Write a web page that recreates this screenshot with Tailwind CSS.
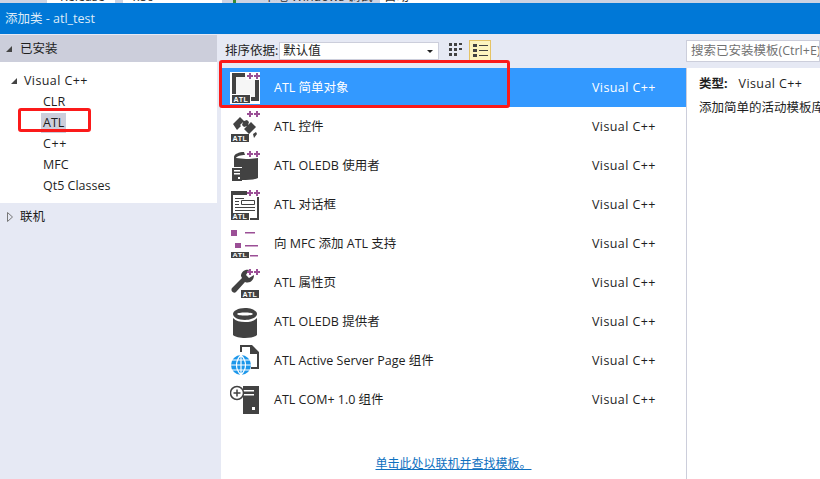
<!DOCTYPE html>
<html lang="zh">
  <head>
    <meta charset="UTF-8" />
    <title>添加类 - atl_test</title>
    <script src="https://cdn.jsdelivr.net/npm/@tailwindcss/browser@4"></script>
  </head>
  <body class="relative h-[479px] w-[820px] overflow-hidden bg-[#e6e9f4] font-['Open_Sans','Noto_Sans_CJK_SC',sans-serif] text-[12.5px] leading-[20px] text-[#1e1e1e]">
    <!-- shared icon parts -->
    <svg class="absolute h-0 w-0">
      <symbol id="plus" viewBox="0 0 13 7" preserveAspectRatio="none">
        <path d="M0 3h6M3 0v6M7 3h6M10 0v6" stroke="#9b4f96" stroke-width="2" fill="none" />
      </symbol>
      <symbol id="atl" viewBox="0 0 19 8" preserveAspectRatio="none">
        <rect width="19" height="8" fill="#424242" />
        <text x="9.500" y="7" text-anchor="middle" font-family="Liberation Sans" font-weight="700" font-size="7.500" letter-spacing=".6" fill="#fff">ATL</text>
      </symbol>
    </svg>

    <!-- the IDE toolbar behind the dialog -->
    <div class="flex h-[3px] overflow-hidden bg-[#ccd3e3] text-[#333]">
      <div class="ml-[47px] h-full w-[68px] bg-white pl-[13px]"><p class="-mt-[13px]">Release</p></div>
      <div class="ml-[8px] h-full w-[99px] bg-white pl-[10px]"><p class="-mt-[13px]">x86</p></div>
      <div class="ml-[11px] h-full w-[3px] bg-[#388a34]"></div>
      <div class="ml-[13px] h-full w-[131px]"><p class="-mt-[13px] pl-[14px]">本地 Windows 调试器</p></div>
      <div class="h-full w-[120px] bg-white"><p class="-mt-[13px] pl-[4px]">自动</p></div>
    </div>

    <header class="flex h-[31px] items-center bg-[#0078d7] pl-[5px] pt-[1px] text-[#dcebf8]">添加类 - atl_test</header>

    <div class="flex h-[445px]">
      <!-- template tree -->
      <aside class="w-[217px] shrink-0">
        <div class="mt-[1px] flex h-[27px] items-center gap-[8px] bg-[#cccedb] pl-[6px]">
          <span class="h-0 w-0 border-b-[6px] border-l-[6px] border-b-[#444] border-l-transparent"></span>
          <span>已安装</span>
        </div>
        <div class="h-[141px] bg-white pt-[8px]">
          <div class="flex h-[21px] items-center gap-[7px] pl-[11px]">
            <span class="h-0 w-0 border-b-[6px] border-l-[6px] border-b-[#444] border-l-transparent"></span>
            <span class="tracking-[0.4px]">Visual C++</span>
          </div>
          <div class="flex h-[21px] items-center pl-[43px]">CLR</div>
          <div class="flex h-[21px] items-center pl-[41px]"><span class="bg-[#cccedb] px-[2px]">ATL</span></div>
          <div class="flex h-[21px] items-center pl-[43px] tracking-[0.6px]">C++</div>
          <div class="flex h-[21px] items-center pl-[43px]">MFC</div>
          <div class="flex h-[21px] items-center pl-[43px]">Qt5 Classes</div>
        </div>
        <div class="flex h-[27px] items-center gap-[7px] pl-[7px]">
          <svg width="6" height="10" viewBox="0 0 6 10"><path d="M.5 .5 5.500 5 .5 9.500z" fill="#e6e9f4" stroke="#777" /></svg>
          <span>联机</span>
        </div>
      </aside>

      <main class="flex min-w-0 flex-1 flex-col">
        <!-- sort and search bar -->
        <div class="flex h-[34px] shrink-0 items-start">
          <span class="ml-[8px] mt-[7px]">排序依据:</span>
          <div class="ml-[1px] mt-[8px] flex h-[18px] w-[160px] items-center justify-between border border-[#cccedb] bg-white pl-[3px] pr-[5px]">
            <span>默认值</span>
            <span class="h-0 w-0 border-x-[3px] border-t-[3px] border-x-transparent border-t-[#222]"></span>
          </div>
          <svg class="ml-[9px] mt-[8px]" width="16" height="18" viewBox="0 0 16 18" fill="#424242">
            <path d="M1 1h3v3H1zM6 1h3v3H6zM11 1h3v2h-3zM1 6h3v3H1zM6 6h3v3H6zM11 6h3v2h-3zM1 11h3v3H1zM6 11h3v3H6z" />
          </svg>
          <div class="ml-[5px] mt-[6px] flex h-[21px] w-[22px] items-center justify-center border border-[#e5c365] bg-[#fdf4bf]">
            <svg width="15" height="15" viewBox="0 0 15 15" fill="#424242">
              <path d="M0 1h4v3H0zM6 2h9v1H6zM0 6h4v3H0zM6 7h9v1H6zM0 11h4v3H0zM6 12h9v1H6z" />
            </svg>
          </div>
          <div class="ml-auto mt-[6px] flex h-[22px] w-[134px] shrink-0 items-center overflow-hidden whitespace-nowrap border border-[#cccedb] bg-white pl-[4px] text-[#717171]">搜索已安装模板(Ctrl+E)</div>
        </div>

        <div class="flex min-h-0 flex-1">
          <!-- template list -->
          <div class="ml-[4px] flex w-[465px] shrink-0 flex-col bg-white">
            <div class="flex h-[39px] items-center bg-[#3399ff] pl-[9px] text-white">
              <svg class="mr-[12px] shrink-0" width="32" height="32" viewBox="0 0 32 32">
                <rect x="0" width="30" height="32" fill="#fff" />
                <rect x="4" y="3" width="23" height="25" fill="#f6f6f6" />
                <path d="M2 1h13v4H6v18H2zM25 7h4v22H16v-4h9z" fill="#424242" />
                <rect x="1" y="22" width="20" height="10" fill="#fff" />
                <use href="#atl" x="2" y="23" width="18" height="8" />
                <rect x="16" width="14" height="8" fill="#fff" />
                <use href="#plus" x="17" y="1" width="13" height="7" />
              </svg>
              <span class="w-[318px]">ATL 简单对象</span><span class="tracking-[0.4px]">Visual C++</span>
            </div>

            <div class="flex h-[39px] items-center pl-[9px]">
              <svg class="mr-[12px] shrink-0" width="32" height="32" viewBox="0 0 32 32">
                <path d="M3 13 10 6l4 4 3-1 2 2-1 3 3-3 5 5-7 7-5-5 3-3-3 1-2-2 1-3-3 3 1 1-4 4z" fill="#424242" />
                <path d="m23 23 3-2 1 2-3 4z" fill="#424242" />
                <use href="#atl" x="1" y="23" width="18" height="8" />
                <use href="#plus" x="17" y="0" width="13" height="7" />
              </svg>
              <span class="w-[318px]">ATL 控件</span><span class="tracking-[0.4px]">Visual C++</span>
            </div>

            <div class="flex h-[39px] items-center pl-[9px]">
              <svg class="mr-[12px] shrink-0" width="32" height="32" viewBox="0 0 32 32">
                <path d="M4 7c0-3 5-5 10-5l1 3c-4 0-8 1-9 3l10 1h3l9-1v20c-4 2-10 2-16 2V17H4z" fill="#424242" />
                <rect x="2" y="18" width="10" height="13" fill="#424242" />
                <path d="M4 20h6v1.500H4zM4 23h6v1.500H4zM8 27h2v2H8z" fill="#fff" />
                <rect x="16" width="14" height="8" fill="#fff" />
                <use href="#plus" x="17" y="1" width="13" height="7" />
              </svg>
              <span class="w-[318px]">ATL OLEDB 使用者</span><span class="tracking-[0.4px]">Visual C++</span>
            </div>

            <div class="flex h-[39px] items-center pl-[9px]">
              <svg class="mr-[12px] shrink-0" width="32" height="32" viewBox="0 0 32 32">
                <path d="M1 2h16v4H3v18H1zM27 8h2v23h-9v-2h7z" fill="#424242" />
                <path d="M5 9h9v1H5zM5 12h4v1H5zM5 15h4v1H5zM5 18h20v1H5zM5 21h20v1H5z" fill="#424242" />
                <path d="M11.500 11.500h13v4h-13z" fill="none" stroke="#424242" />
                <use href="#atl" x="1" y="24" width="18" height="7" />
                <use href="#plus" x="17" y="1" width="13" height="7" />
              </svg>
              <span class="w-[318px]">ATL 对话框</span><span class="tracking-[0.4px]">Visual C++</span>
            </div>

            <div class="flex h-[39px] items-center pl-[9px]">
              <svg class="mr-[12px] shrink-0" width="32" height="32" viewBox="0 0 32 32">
                <path d="M1 2h6v6H1zM5 15h6v5H5zM15 4h10v1.500H15zM15 17h13v1.500H15zM20 27h8v1.500H20z" fill="#9b4f96" />
                <use href="#atl" x="1" y="24" width="18" height="6" />
              </svg>
              <span class="w-[318px]">向 MFC 添加 ATL 支持</span><span class="tracking-[0.4px]">Visual C++</span>
            </div>

            <div class="flex h-[39px] items-center pl-[9px]">
              <svg class="mr-[12px] shrink-0" width="32" height="32" viewBox="0 0 32 32">
                <path d="M19 3c-4-1-8 2-8 6l1 2-10 10c-2 3 2 6 4 4l9-10c5 2 9-2 9-7l-5 3-3-3z" fill="#424242" />
                <use href="#atl" x="11" y="23" width="18" height="8" />
                <use href="#plus" x="17" y="2" width="13" height="7" />
              </svg>
              <span class="w-[318px]">ATL 属性页</span><span class="tracking-[0.4px]">Visual C++</span>
            </div>

            <div class="flex h-[39px] items-center pl-[9px]">
              <svg class="mr-[12px] shrink-0" width="32" height="32" viewBox="0 0 32 32">
                <path d="M3 8c0-3 5-6 12-6s12 3 12 6-5 6-12 6S3 11 3 8zm4 0c1 2 15 2 16 0-1-2-15-2-16 0z" fill="#424242" />
                <path d="M3 12c3 3 7 4 12 4s9-1 12-4v17c-2 2-7 3-12 3S5 31 3 29z" fill="#424242" />
              </svg>
              <span class="w-[318px]">ATL OLEDB 提供者</span><span class="tracking-[0.4px]">Visual C++</span>
            </div>

            <div class="flex h-[39px] items-center pl-[9px]">
              <svg class="mr-[12px] shrink-0" width="32" height="36" viewBox="0 0 32 36">
                <path d="M10 2h12l7 7v17h-8v-2h6V11h-7V4H12v5h-2z" fill="#424242" />
                <circle cx="11" cy="22" r="10" fill="#1c97ea" />
                <path d="M1 22h20M2 17h18M2 27h18M11 12v20M11 12c-6 6-6 14 0 20M11 12c6 6 6 14 0 20" stroke="#fff" stroke-width="1.200" fill="none" />
              </svg>
              <span class="w-[318px]">ATL Active Server Page 组件</span><span class="tracking-[0.4px]">Visual C++</span>
            </div>

            <div class="flex h-[39px] items-center pl-[9px]">
              <svg class="mr-[12px] shrink-0" width="32" height="32" viewBox="0 0 32 32">
                <path d="M13 2h16v28H13z" fill="#424242" />
                <path d="M13 6h11v1.500H13zM13 10h11v1.500H13z" fill="#fff" />
                <rect x="22" y="23" width="3" height="3" fill="#fff" />
                <circle cx="7" cy="9" r="6.500" fill="#fff" stroke="#424242" stroke-width="1.500" />
                <path d="M3.500 9h7M7 5.500v7" stroke="#424242" stroke-width="1.500" />
              </svg>
              <span class="w-[318px]">ATL COM+ 1.0 组件</span><span class="tracking-[0.4px]">Visual C++</span>
            </div>

            <div class="flex flex-1 items-end justify-center pb-[5px]">
              <a class="text-[12px] text-[#0e70c0] underline" href="#">单击此处以联机并查找模板。</a>
            </div>
          </div>

          <!-- description pane -->
          <div class="flex-1 overflow-hidden whitespace-nowrap border-l border-[#cccedb] bg-white pl-[12px] pt-[6px]">
            <p class="flex h-[20px] items-center gap-[11px]"><b class="font-bold">类型:</b><span class="tracking-[0.4px]">Visual C++</span></p>
            <p class="mt-[4px]">添加简单的活动模板库对象。</p>
          </div>
        </div>
      </main>
    </div>

    <!-- red annotation boxes drawn over the screenshot -->
    <div class="absolute left-[219px] top-[60px] h-[48px] w-[291px] rounded-[3px] border-[3px] border-[#fb1a1a]"></div>
    <div class="absolute left-[18px] top-[108px] h-[24px] w-[73px] rounded-[3px] border-[3px] border-[#fb1a1a]"></div>
  </body>
</html>
